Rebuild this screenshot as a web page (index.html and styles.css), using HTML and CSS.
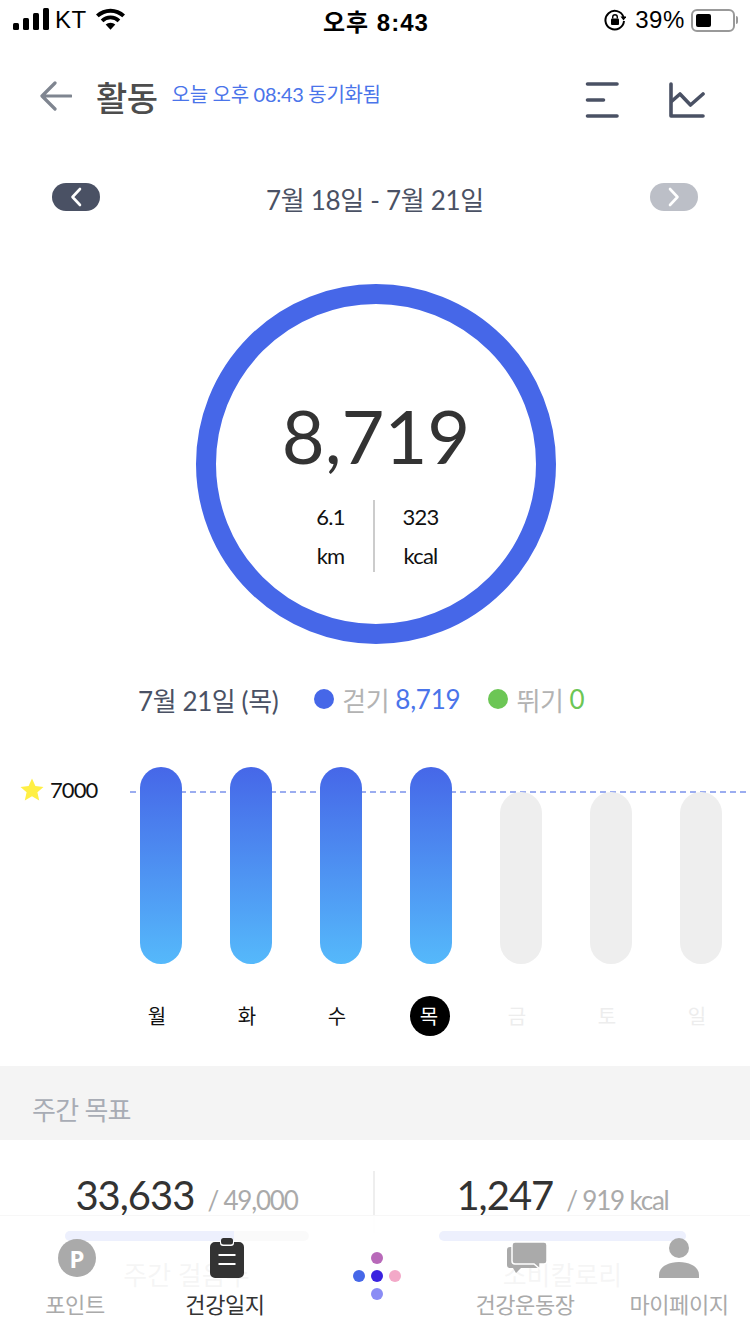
FILE: index.html
```html
<!DOCTYPE html>
<html lang="ko">
<head>
<meta charset="utf-8">
<title>활동</title>
<link rel="stylesheet" href="styles.css">
</head>
<body>
<div class="page">
  <div class="status">
    <div class="status-left">
      <svg class="sig" width="36" height="22" viewBox="0 0 36 22"><rect x="0" y="15" width="6" height="7" rx="1.5"/><rect x="10" y="10" width="6" height="12" rx="1.5"/><rect x="20" y="5" width="6" height="17" rx="1.5"/><rect x="30" y="0" width="6" height="22" rx="1.5"/></svg>
      <span class="carrier">KT</span>
      <svg class="wifi" width="29" height="22" viewBox="0 0 30 22"><path d="M15 22l-5-5.2a7.2 7.2 0 0 1 10 0z"/><path d="M7.600 14.300l-2.700-2.800a14.600 14.600 0 0 1 20.200 0l-2.700 2.800a10.700 10.700 0 0 0-14.800 0z"/><path d="M2.800 9.300L0 6.400a21.700 21.700 0 0 1 30 0l-2.800 2.900a17.700 17.700 0 0 0-24.400 0z"/></svg>
    </div>
    <div class="status-time">오후 8:43</div>
    <div class="status-right">
      <svg width="22" height="22" viewBox="0 0 22 22" fill="none"><path d="M19.500 8A9.300 9.300 0 1 0 20 12" stroke="#000" stroke-width="2"/><path d="M16.500 7.500h6l-3 4z" fill="#000"/><rect x="7" y="9.500" width="8" height="6.500" rx="1" fill="#000"/><path d="M8.700 9.500V8a2.300 2.300 0 0 1 4.600 0v1.500" stroke="#000" stroke-width="1.400"/></svg>
      <span class="pct">39%</span>
      <div class="battery"><div class="battery-fill"></div></div><div class="battery-cap"></div>
    </div>
  </div>

  <header class="head">
    <svg class="back" width="32" height="30" viewBox="0 0 32 30" fill="none"><path d="M15 2L2 15l13 13M3 15h28" stroke="#7f8590" stroke-width="3.200" stroke-linecap="round" stroke-linejoin="round"/></svg>
    <h1 class="title">활동</h1>
    <span class="sync">오늘 오후 08:43 동기화됨</span>
    <div class="head-icons">
      <svg width="34" height="36" viewBox="0 0 34 36" fill="none" stroke="#4a5164" stroke-width="3.600" stroke-linecap="round"><path d="M2.500 2h29.500M2.500 18h16M2.500 34h29.500"/></svg>
      <svg width="36" height="36" viewBox="0 0 36 36" fill="none" stroke="#4a5164" stroke-width="3.600" stroke-linecap="round" stroke-linejoin="round"><path d="M2 2v32h32"/><path d="M3 19l8-7 10.500 11 12.500-11"/></svg>
    </div>
  </header>

  <div class="range">
    <span class="pill pill-dark"><svg width="12" height="20" viewBox="0 0 12 20" fill="none"><path d="M10 2L2.500 10l7.500 8" stroke="#fff" stroke-width="2.600" stroke-linecap="round" stroke-linejoin="round"/></svg></span>
    <span class="range-text">7월 18일 - 7월 21일</span>
    <span class="pill pill-light"><svg width="12" height="20" viewBox="0 0 12 20" fill="none"><path d="M2 2l7.500 8L2 18" stroke="#fff" stroke-width="2.600" stroke-linecap="round" stroke-linejoin="round"/></svg></span>
  </div>

  <div class="ring-wrap">
    <div class="ring">
      <div class="steps">8,719</div>
      <div class="ring-stats">
        <div class="ring-stat stat-left"><span>6.1</span><span>km</span></div>
        <div class="ring-stat stat-right"><span>323</span><span>kcal</span></div>
      </div>
    </div>
  </div>

  <div class="legend">
    <span class="legend-date">7월 21일 (목)</span>
    <span class="legend-item"><i class="dot dot-blue"></i><span class="legend-label">걷기</span> <b class="val-blue">8,719</b></span>
    <span class="legend-item"><i class="dot dot-green"></i><span class="legend-label">뛰기</span> <b class="val-green">0</b></span>
  </div>

  <div class="chart">
    <div class="goal">
      <svg width="24" height="24" viewBox="0 0 24 24"><path d="M12 .5l3.400 7.600 8.100.8-6.100 5.400 1.800 8.100L12 18.200l-7.200 4.200 1.800-8.100L.5 8.900l8.100-.8z" fill="#ffef45"/></svg>
      <span>7000</span>
    </div>
    <div class="goal-line"></div>
    <div class="bars">
      <div class="col"><div class="bar bar-on"></div><span class="day">월</span></div>
      <div class="col"><div class="bar bar-on"></div><span class="day">화</span></div>
      <div class="col"><div class="bar bar-on"></div><span class="day">수</span></div>
      <div class="col"><div class="bar bar-on"></div><span class="day day-now">목</span></div>
      <div class="col"><div class="bar bar-off"></div><span class="day day-off">금</span></div>
      <div class="col"><div class="bar bar-off"></div><span class="day day-off">토</span></div>
      <div class="col"><div class="bar bar-off"></div><span class="day day-off">일</span></div>
    </div>
  </div>

  <div class="section-head">주간 목표</div>

  <div class="weekly">
    <div class="week-card">
      <div class="week-num"><strong>33,633</strong><span>/ 49,000</span></div>
      <div class="track"><div class="fill fill-steps"></div></div>
      <div class="week-label">주간 걸음수</div>
    </div>
    <div class="week-card week-card-right">
      <div class="week-num"><strong>1,247</strong><span>/ 919 kcal</span></div>
      <div class="track"><div class="fill fill-full"></div></div>
      <div class="week-label">소비칼로리</div>
    </div>
  </div>

  <nav class="tabbar">
    <div class="tab">
      <div class="tab-icon"><span class="p-badge">P</span></div>
      <span class="tab-label">포인트</span>
    </div>
    <div class="tab tab-on">
      <div class="tab-icon"><svg width="34" height="40" viewBox="0 0 34 40"><path d="M5 4h5v1a3 3 0 0 0 3 3h8a3 3 0 0 0 3-3V4h5a5 5 0 0 1 5 5v26a5 5 0 0 1-5 5H5a5 5 0 0 1-5-5V9a5 5 0 0 1 5-5z" fill="#333"/><rect x="11" y="0" width="12" height="6.500" rx="2.500" fill="#333"/><path d="M8.500 17h17M8.500 26h17" stroke="#fff" stroke-width="2"/></svg></div>
      <span class="tab-label">건강일지</span>
    </div>
    <div class="tab tab-center">
      <div class="dots">
        <i class="d d1"></i><i class="d d2"></i><i class="d d3"></i><i class="d d4"></i><i class="d d5"></i>
      </div>
    </div>
    <div class="tab">
      <div class="tab-icon"><svg width="40" height="32" viewBox="0 0 40 32"><path d="M3 5a3 3 0 0 0-3 3v15a3 3 0 0 0 3 3h3l3 5 5-5h15a3 3 0 0 0 3-3V8a3 3 0 0 0-3-3z" fill="#aaa"/><path d="M8 0h29a3 3 0 0 1 3 3v16a3 3 0 0 1-3 3h-4v5l-6-5H8a3 3 0 0 1-3-3V3a3 3 0 0 1 3-3z" fill="#aaa" stroke="#fff" stroke-width="1.500"/></svg></div>
      <span class="tab-label">건강운동장</span>
    </div>
    <div class="tab tab-last">
      <div class="tab-icon"><svg width="40" height="40" viewBox="0 0 40 40"><circle cx="20" cy="10" r="10" fill="#aaa"/><path d="M0 40v-3c0-8 9-13 20-13s20 5 20 13v3z" fill="#aaa"/></svg></div>
      <span class="tab-label">마이페이지</span>
    </div>
  </nav>
</div>
</body>
</html>
```
FILE: styles.css
```css
* { box-sizing: border-box; }
html, body { margin: 0; padding: 0; background: #fff; }
body { font-family: Lato, "Noto Sans CJK KR", sans-serif; }
.page { position: relative; width: 750px; height: 1334px; overflow: hidden; background: #fff; }

.status { height: 40px; padding: 0 0 0 13px; display: flex; align-items: center; color: #000; font-family: "Liberation Sans", "Noto Sans CJK KR", sans-serif; font-size: 24px; }
.status-left { width: 310px; display: flex; align-items: center; gap: 6px; }
.sig { fill: #000; margin-top: -3px; }
.carrier { letter-spacing: .5px; }
.wifi { fill: #000; margin-left: 3px; margin-top: -3px; }
.status-time { flex: none; font-weight: 700; letter-spacing: 1px; font-size: 24px; }
.status-right { flex: 1; display: flex; align-items: center; justify-content: flex-end; padding-right: 12px; gap: 0; }
.status-right svg { margin-right: 9px; }
.pct { margin-right: 6px; letter-spacing: .6px; }
.battery { width: 44px; height: 23px; border: 2px solid #999; border-radius: 6px; padding: 3px; }
.battery-fill { width: 15px; height: 13px; background: #000; border-radius: 2px; }
.battery-cap { width: 2px; height: 8px; background: #999; margin-left: 1px; border-radius: 0 2px 2px 0; }

.head { height: 112px; display: flex; align-items: center; padding: 0 45px 0 40px; }
.back { flex: none; }
.title { margin: 0 0 0 24px; font-size: 34px; font-weight: 500; color: #4d4d4d; letter-spacing: -.5px; }
.sync { margin: -6px 0 0 14px; font-size: 20px; color: #4a74ea; letter-spacing: -.3px; }
.head-icons { margin-left: auto; margin-top: 8px; display: flex; gap: 50px; align-items: center; }

.range { display: flex; align-items: center; justify-content: space-between; padding: 0 52px; height: 40px; margin-top: 26px; }
.pill { width: 48px; height: 28px; border-radius: 14px; display: flex; align-items: center; justify-content: center; margin-top: -2px; }
.pill-dark { background: #4a5164; }
.pill-light { background: #bcbfc7; }
.range-text { font-size: 26px; color: #4a5164; letter-spacing: -.3px; }

.ring-wrap { display: flex; justify-content: center; margin-top: 66px; padding-left: 2px; }
.ring { width: 360px; height: 360px; border: 20px solid #4667e8; border-radius: 50%; display: flex; flex-direction: column; align-items: center; }
.steps { margin-top: 85px; font-size: 74px; line-height: 94px; color: #333; letter-spacing: 0; }
.ring-stats { display: flex; margin-top: 17px; height: 72px; }
.ring-stat { display: flex; flex-direction: column; align-items: center; justify-content: space-between; padding-top: 1px; font-size: 22px; line-height: 32px; color: #111; letter-spacing: -.8px; }
.stat-left { width: 87px; border-right: 2px solid #ccc; }
.stat-right { width: 89px; padding-left: 2px; }

.legend { display: flex; align-items: center; height: 40px; margin: 35px 0 2px; padding-left: 138px; font-size: 26px; letter-spacing: -.4px; }
.legend-date { color: #4a5164; margin-right: 36px; }
.legend-item { display: flex; align-items: center; gap: 6px; margin-right: 28px; }
.legend-label { color: #b3b3b3; }
.dot { width: 20px; height: 20px; border-radius: 50%; margin-right: 2px; }
.dot-blue { background: #4667e8; }
.dot-green { background: #6cc655; }
.legend-item b { font-weight: 400; letter-spacing: -.2px; }
.val-blue { color: #4a74ea; }
.val-green { color: #6cc655; }

.chart { position: relative; height: 345px; }
.goal { position: absolute; left: 20px; top: 55px; display: flex; align-items: center; gap: 6px; font-size: 22px; color: #111; letter-spacing: -.9px; }
.goal-line { position: absolute; left: 130px; right: 0; top: 70px; height: 2px; background: repeating-linear-gradient(90deg, #9badf0 0 6px, transparent 6px 10px); }
.bars { position: relative; display: flex; padding-left: 130px; padding-top: 21px; }
.col { flex: none; width: 90px; padding-left: 10px; display: flex; flex-direction: column; align-items: flex-start; justify-content: flex-end; height: 274px; }
.bar { flex: none; width: 42px; border-radius: 21px; }
.bar-on { height: 197px; background: linear-gradient(#4667e8, #55b9fb); }
.bar-off { height: 172px; background: #eee; }
.day { flex: none; width: 40px; height: 40px; margin: 32px 0 -20px -2px; padding: 0 2px 2px 0; border-radius: 50%; display: flex; align-items: center; justify-content: center; font-size: 20px; color: #111; font-family: "Noto Sans CJK KR", sans-serif; }
.day-now { background: #000; color: #fff; margin-left: 0; }
.day-off { color: #ededed; }

.section-head { height: 74px; background: #f4f4f4; padding: 10px 0 0 32px; display: flex; align-items: center; font-size: 26px; color: #a8acb5; letter-spacing: -.7px; }

.weekly { display: flex; padding-top: 31px; }
.week-card { width: 375px; display: flex; flex-direction: column; align-items: center; border-right: 2px solid #eee; height: 62px; }
.week-card-right { border-right: 0; }
.week-num { display: flex; align-items: baseline; gap: 13px; height: 60px; flex: none; color: #333; }
.week-num strong { font-size: 40px; font-weight: 400; letter-spacing: -1px; }
.week-num span { font-size: 26px; color: #aaa; letter-spacing: -1.2px; }
.track { flex: none; width: 244px; height: 10px; background: #ccc; border-radius: 5px; overflow: hidden; }
.week-card-right .track { width: 247px; }
.fill { height: 100%; background: #4667e8; }
.fill-steps { width: 69.3%; }
.fill-full { width: 100%; }
.week-label { flex: none; margin-top: 14px; font-size: 26px; color: #999; }

.tabbar { position: absolute; left: 0; right: 0; bottom: 0; height: 119px; background: rgba(255,255,255,.9); border-top: 1px solid #f7f7f7; display: flex; padding-top: 21px; }
.tab { flex: none; width: 150px; display: flex; flex-direction: column; align-items: center; font-size: 22px; color: #aaa; letter-spacing: -.4px; }
.tab-icon { height: 42px; display: flex; align-items: center; justify-content: center; margin-left: 4px; }
.tab-label { margin-top: 9px; line-height: 34px; }
.tab-on { color: #333; }
.tab-last { padding-left: 8px; }
.tab-last .tab-icon { margin-left: 0; }
.p-badge { width: 38px; height: 38px; border-radius: 50%; background: #aaa; color: #fff; display: flex; align-items: center; justify-content: center; font-size: 24px; font-weight: 700; font-family: "Noto Sans", sans-serif; letter-spacing: 0; }
.dots { position: relative; width: 60px; height: 60px; margin: 13px 0 0 4px; }
.d { position: absolute; width: 12px; height: 12px; border-radius: 50%; }
.d1 { left: 24px; top: 2px; background: #b869b9; }
.d2 { left: 6px; top: 20px; background: #4667e8; }
.d3 { left: 24px; top: 20px; background: #3a22e0; }
.d4 { left: 42px; top: 20px; background: #f3a9c8; }
.d5 { left: 24px; top: 38px; background: #8a8cf5; }
```
